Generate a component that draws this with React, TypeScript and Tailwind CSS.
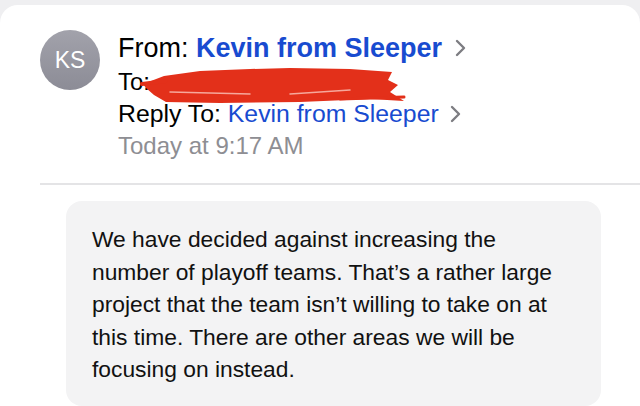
import React from "react";

function Chevron({ className = "" }: { className?: string }) {
  return (
    <svg width="11" height="18" viewBox="0 0 11 18" className={"inline-block " + className} fill="none">
      <path d="M2 2l7 7-7 7" stroke="#7d7d82" strokeWidth="2.4" strokeLinecap="round" strokeLinejoin="round" />
    </svg>
  );
}

function Scribble() {
  // red marker over the recipient address
  return (
    <svg
      className="pointer-events-none absolute left-[140px] top-[60px]"
      width="270"
      height="42"
      viewBox="0 0 270 42"
      fill="none"
    >
      <path
        d="M3 19 L24 11 L60 6 L110 4 L150 3 L210 4 L252 7 L248 15 L258 20 L250 27 L264 36 L230 34 L160 37 L80 38 L26 37 L14 30 L6 23 Z"
        fill="#e3301a"
      />
      <path d="M2 19 L26 16" stroke="#e3301a" strokeWidth="4" strokeLinecap="round" />
      <path d="M30 27 L110 29" stroke="#f6a89c" strokeWidth="1.5" strokeLinecap="round" />
      <path d="M150 29 L210 25" stroke="#f6a89c" strokeWidth="1.5" strokeLinecap="round" />
      <path d="M200 34 L264 32" stroke="#e3301a" strokeWidth="3" strokeLinecap="round" />
    </svg>
  );
}

export default function App() {
  return (
    <div className="h-[406px] w-[640px] overflow-hidden bg-[#efeff1] pt-[5px] font-['Liberation_Sans',Arial,sans-serif]">
      <div className="relative h-full rounded-t-[18px] bg-white">
        {/* Header */}
        <div className="flex pl-10 pt-[25px]">
          <div className="flex h-[60px] w-[60px] shrink-0 items-center justify-center rounded-full bg-gradient-to-b from-[#a2a2ab] to-[#8c8c96] text-[23px] text-white">
            KS
          </div>
          <div className="ml-[18px] text-[24px] leading-[32px] text-black">
            <div className="flex items-center text-[27px] leading-[36px]">
              <span>From:&nbsp;</span>
              <span className="font-semibold text-[#184bd0]">Kevin from Sleeper</span>
              <Chevron className="ml-[13px]" />
            </div>
            <div>To:</div>
            <div className="flex items-center text-[24.8px]">
              <span>Reply To:&nbsp;</span>
              <span className="text-[#184bd0]">Kevin from Sleeper</span>
              <Chevron className="ml-[11px]" />
            </div>
            <div className="text-[#8e8e93]">Today at 9:17 AM</div>
          </div>
        </div>
        <Scribble />

        <div className="ml-10 mt-[21px] h-[2px] bg-[#e4e4e6]" />

        {/* Message */}
        <div className="ml-[66px] mr-[39px] mt-[16px] rounded-[16px] bg-[#f3f3f4] pb-[20px] pl-[26px] pr-[34px] pt-[22px] text-[22.8px] leading-[32.5px] text-[#111]">
          We have decided against increasing the number of playoff teams. That’s a rather large project that the team isn’t
          willing to take on at this time. There are other areas we will be focusing on instead.
        </div>
      </div>
    </div>
  );
}
